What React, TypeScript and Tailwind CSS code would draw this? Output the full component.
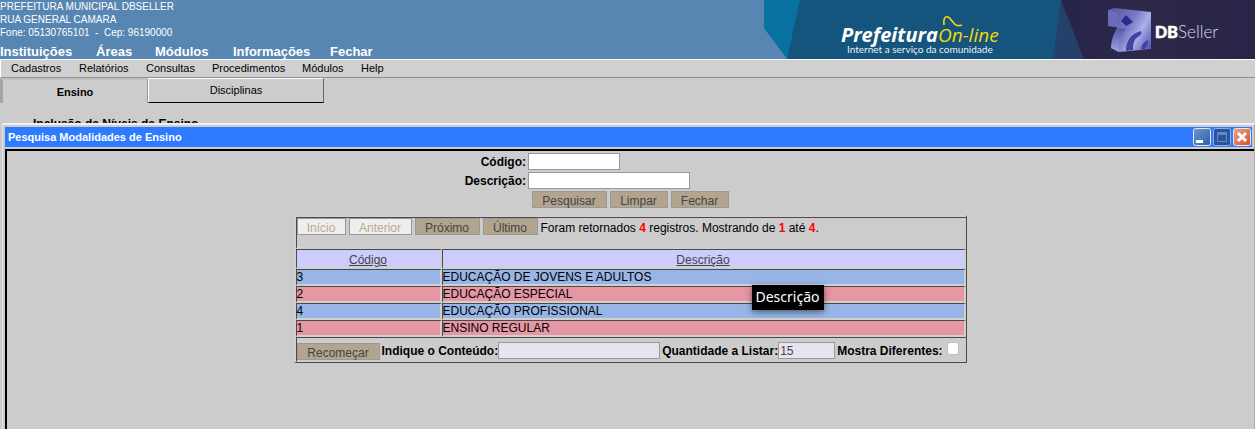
import type { ReactNode } from "react";

const menus = [
  { label: "Instituições", width: "w-24" },
  { label: "Áreas", width: "w-[59px]" },
  { label: "Módulos", width: "w-[78px]" },
  { label: "Informações", width: "w-[97px]" },
  { label: "Fechar", width: "w-auto" },
];

const submenus = [
  { label: "Cadastros", width: "w-[68px]" },
  { label: "Relatórios", width: "w-[67px]" },
  { label: "Consultas", width: "w-[66px]" },
  { label: "Procedimentos", width: "w-[90px]" },
  { label: "Módulos", width: "w-[59px]" },
  { label: "Help", width: "w-auto" },
];

const rows = [
  { code: "3", name: "EDUCAÇÃO DE JOVENS E ADULTOS" },
  { code: "2", name: "EDUCAÇÃO ESPECIAL" },
  { code: "4", name: "EDUCAÇÃO PROFISSIONAL" },
  { code: "1", name: "ENSINO REGULAR" },
];

const cell = "border-t border-l border-b-2 border-r-2 border-t-[#4a4a4a] border-l-[#4a4a4a] border-b-[#d2d0ce] border-r-[#d2d0ce]";

function Btn({ children, width, disabled }: { children: ReactNode; width: string; disabled?: boolean }) {
  return (
    <button
      type="button"
      disabled={disabled}
      className={`h-[17px] shrink-0 border border-[#999] pt-[2px] text-center leading-[14px] ${width} ${
        disabled ? "bg-[#eee] text-[#b9ab93]" : "bg-[#b2a48e] text-[#444]"
      }`}
    >
      {children}
    </button>
  );
}

function Banner() {
  return (
    <svg width="491" height="59" viewBox="0 0 491 59" className="shrink-0" role="img" aria-label="Prefeitura On-line, DBSeller">
      <defs>
        <linearGradient id="cube" x1="0" y1="0.2" x2="1" y2="0.8">
          <stop offset="0" stopColor="#5a5ba8" />
          <stop offset="0.45" stopColor="#7779c4" />
          <stop offset="0.7" stopColor="#a9b0ea" />
          <stop offset="1" stopColor="#5f60b5" />
        </linearGradient>
        <linearGradient id="side" x1="0" y1="0" x2="0" y2="1">
          <stop offset="0" stopColor="#5557a4" />
          <stop offset="1" stopColor="#9aa3e2" />
        </linearGradient>
        <linearGradient id="night" x1="0" x2="1">
          <stop offset="0" stopColor="#25244a" />
          <stop offset="0.4" stopColor="#2e2849" />
          <stop offset="1" stopColor="#282548" />
        </linearGradient>
      </defs>
      <path d="M0 0H40L23 59L0 28Z" fill="#0971a0" />
      <path d="M36 0H310V59H23Z" fill="#15547c" />
      <path d="M297 0L289 59H320V0Z" fill="#25406a" />
      <path d="M297 0H491V59H320Z" fill="url(#night)" />
      <text x="77" y="42" fill="#fff" fontFamily="'Open Sans', sans-serif" fontSize="20" fontWeight="700" fontStyle="italic">Prefeitura</text>
      <text x="174" y="42" fill="#f2d90c" fontFamily="'Open Sans', sans-serif" fontSize="19" fontStyle="italic">On-line</text>
      <path d="M180 25C179 19 181 16 184 17C189 19 189 28 198 25" fill="none" stroke="#f2d90c" strokeWidth="1.6" />
      <text x="83" y="53" fill="#e8f0f6" fontFamily="Lato, sans-serif" fontSize="10">Internet a serviço da comunidade</text>
      <path d="M344 10L350 8L387 12V49L355 52L347 48L352 33L353 27L344 26Z" fill="url(#cube)" />
      <path d="M344 10L353 12V27L344 26Z" fill="#6a6cb8" />
      <path d="M362 15L369 22L362 26L357 21Z" fill="#33268a" />
      <path d="M353 28C350 33 347 41 347 48L355 52C354 41 357 34 362 29Z" fill="url(#side)" />
      <path d="M362 51C362 40 367 34 377 31C378 33 377 35 375 36C370 39 369 43 369 50Z" fill="#4442a0" />
      <path d="M377 49C378 44 380 42 384 40V44L381 49Z" fill="#4442a0" />
      <text x="391" y="38" fill="#fff" stroke="#fff" strokeWidth="0.6" fontFamily="Lato, sans-serif" fontSize="16" fontWeight="900">DB</text>
      <text x="414" y="38" fill="#dcdbe6" fontFamily="Lato, sans-serif" fontSize="17" fontWeight="300">Seller</text>
    </svg>
  );
}

function WindowButton({ kind }: { kind: "Minimizar" | "Maximizar" | "Fechar" }) {
  return (
    <button type="button" aria-label={kind} className="h-[18px] w-[18px]">
      <svg width="18" height="18" viewBox="0 0 18 18">
        <defs>
          <linearGradient id={`wb-${kind}`} x1="0" y1="0" x2="1" y2="1">
            <stop offset="0" stopColor={kind === "Fechar" ? "#eaa58f" : kind === "Minimizar" ? "#6e9bd3" : "#2b5595"} />
            <stop offset="1" stopColor={kind === "Fechar" ? "#d35128" : kind === "Minimizar" ? "#2c5d9f" : "#2b5595"} />
          </linearGradient>
        </defs>
        <rect x="0.5" y="0.5" width="17" height="17" rx="2" fill={`url(#wb-${kind})`} stroke={kind === "Maximizar" ? "#8eb0e2" : "#e4e8f0"} />
        {kind === "Minimizar" && <rect x="3" y="12" width="7" height="3" fill="#fff" />}
        {kind === "Maximizar" && <path d="M4 4H14V14H4ZM5 7V13H13V7Z" fill="#5b8bd0" fillRule="evenodd" />}
        {kind === "Fechar" && <path d="M5 5L13 13M13 5L5 13" stroke="#fff" strokeWidth="3" />}
      </svg>
    </button>
  );
}

export default function App() {
  return (
    <div className="flex h-screen flex-col overflow-hidden bg-[#ccc] font-['Liberation_Sans',Arial,sans-serif] text-[12px] leading-[14px] text-black">
      <header className="flex h-[59px] shrink-0 justify-between bg-[#5786b2] text-white">
        <div className="whitespace-nowrap">
          <address className="text-[10px] leading-[13px] not-italic">
            PREFEITURA MUNICIPAL DBSELLER
            <br />
            RUA GENERAL CAMARA
            <br />
            Fone: 05130765101 &nbsp;-&nbsp; Cep: 96190000
          </address>
          <nav className="mt-[5px] flex text-[13px] leading-4 font-bold">
            {menus.map((m) => (
              <a key={m.label} href="#" className={m.width}>{m.label}</a>
            ))}
          </nav>
        </div>
        <Banner />
      </header>

      <nav className="flex h-[19px] shrink-0 border-t border-b border-l border-t-white border-b-[#909090] border-l-white bg-[#d0d0d0] pl-[10px] text-[11px] leading-[17px]">
        {submenus.map((m) => (
          <a key={m.label} href="#" className={m.width}>{m.label}</a>
        ))}
      </nav>

      <div className="flex h-[25px] shrink-0 text-[11px]">
        <button type="button" className="w-[148px] border-t-2 border-r border-l-3 border-t-[#c0c0c0] border-r-[#999] border-l-[#a5a5a5] font-bold">Ensino</button>
        <button type="button" className="w-[176px] border-t border-r border-b border-l border-t-white border-r-[#666] border-b-black border-l-white pb-[2px]">Disciplinas</button>
      </div>
      <div className="h-5 shrink-0 overflow-hidden pt-[14px] pl-[33px] text-[12px] font-bold">Inclusão de Níveis de Ensino</div>

      <section className="ml-[2px] flex min-h-0 grow flex-col border-t-2 border-r border-l border-t-[#f0f0f0] border-r-[#b5a98f] border-l-[#e4e4e4] pt-[2px] pl-[2px]">
        <div className="mr-[2px] flex h-5 shrink-0 items-center justify-between bg-[#2e7bff] pr-px pl-[3px]">
          <h1 className="text-[11px] font-bold text-white">Pesquisa Modalidades de Ensino</h1>
          <div className="flex gap-[2px]">
            <WindowButton kind="Minimizar" />
            <WindowButton kind="Maximizar" />
            <WindowButton kind="Fechar" />
          </div>
        </div>

        <main className="mt-[2px] grow border-t-2 border-l-2 border-black pt-[2px] pr-px">
          <form className="mx-auto w-[336px]">
            <div className="grid grid-cols-[64px_1fr] gap-x-[2px] gap-y-px">
              <label htmlFor="codigo" className="justify-self-end leading-[18px] font-bold">Código:</label>
              <input id="codigo" className="h-[17px] w-[92px] border border-[#999] bg-white px-1" />
              <label htmlFor="descricao" className="justify-self-end leading-[18px] font-bold">Descrição:</label>
              <input id="descricao" className="h-[17px] w-[162px] border border-[#999] bg-white px-1" />
            </div>
            <div className="mt-px flex justify-center gap-[3px]">
              <Btn width="w-[75px]">Pesquisar</Btn>
              <Btn width="w-[58px]">Limpar</Btn>
              <Btn width="w-[58px]">Fechar</Btn>
            </div>
          </form>

          <div className="relative mx-auto mt-[7px] w-[673px] border-t-2 border-r border-b border-l-2 border-t-[#d2d0ce] border-r-[#4a4a4a] border-b-[#4a4a4a] border-l-[#d2d0ce]">
            <div className="flex h-8 gap-[3px] border-t border-b-2 border-l border-t-[#4a4a4a] border-b-[#d2d0ce] border-l-[#4a4a4a]">
              <Btn width="w-[49px]" disabled>Início</Btn>
              <Btn width="w-[63px]" disabled>Anterior</Btn>
              <Btn width="w-[65px]">Próximo</Btn>
              <Btn width="w-[55px]">Último</Btn>
              <p className="leading-5 whitespace-nowrap">
                Foram retornados <b className="text-[#f00]">4</b> registros. Mostrando de <b className="text-[#f00]">1</b> até <b className="text-[#f00]">4</b>.
              </p>
            </div>
            <table className="w-full table-fixed border-separate border-spacing-0">
              <thead>
                <tr className="h-5 bg-[#ccf] text-[#444]">
                  <th className={`${cell} w-[146px] p-0 pt-[3px] font-normal`}>
                    <a href="#" className="underline">Código</a>
                  </th>
                  <th className={`${cell} p-0 pt-[3px] font-normal`}>
                    <a href="#" className="underline">Descrição</a>
                  </th>
                </tr>
              </thead>
              <tbody>
                {rows.map((r, i) => (
                  <tr key={r.code} className={`h-[17px] ${i % 2 ? "bg-[#e796a4]" : "bg-[#97b5e6]"}`}>
                    <td className={`${cell} p-0`}>{r.code}</td>
                    <td className={`${cell} p-0`}>{r.name}</td>
                  </tr>
                ))}
              </tbody>
            </table>
            <div className="flex h-[25px] items-end gap-[2px] border-t border-b border-l border-t-[#4a4a4a] border-b-[#d2d0ce] border-l-[#4a4a4a] pb-px whitespace-nowrap">
              <Btn width="w-[83px]">Recomeçar</Btn>
              <div className="flex">
                <label htmlFor="conteudo" className="leading-[18px] font-bold">Indique o Conteúdo:</label>
                <input id="conteudo" className="h-[17px] w-[162px] border border-[#999] bg-[#e6e4f1] px-px" />
              </div>
              <div className="flex">
                <label htmlFor="quantidade" className="leading-[18px] font-bold">Quantidade a Listar:</label>
                <input id="quantidade" defaultValue="15" className="h-[17px] w-[57px] border border-[#999] bg-[#e6e4f1] px-px text-[#444]" />
              </div>
              <div className="flex gap-1">
                <label htmlFor="diferentes" className="leading-[18px] font-bold">Mostra Diferentes:</label>
                <input id="diferentes" type="checkbox" className="h-[13px] w-3 appearance-none rounded-[3px] border border-[#c8beb0] bg-white" />
              </div>
            </div>
            <div role="tooltip" className="absolute top-[68px] left-[456px] h-[25px] w-[72px] bg-black text-center font-['Noto_Sans',sans-serif] text-[14px] leading-[24px] text-white shadow-[0_2px_6px_rgba(0,0,0,0.5)]">
              Descrição
            </div>
          </div>
        </main>
      </section>
    </div>
  );
}
